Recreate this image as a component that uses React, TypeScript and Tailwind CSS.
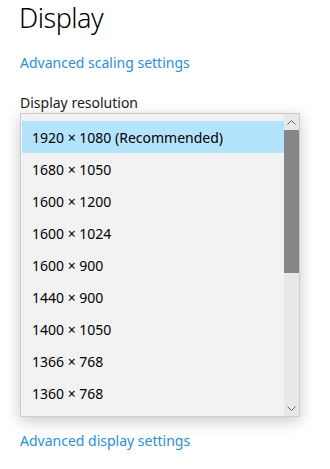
import React from "react";

const items = [
  "1920 × 1080 (Recommended)",
  "1680 × 1050",
  "1600 × 1200",
  "1600 × 1024",
  "1600 × 900",
  "1440 × 900",
  "1400 × 1050",
  "1366 × 768",
  "1360 × 768",
];

export default function App() {
  return (
    <div
      className="w-[330px] h-[469px] bg-white overflow-hidden text-black"
      style={{ fontFamily: '"Noto Sans", "Open Sans", sans-serif' }}
    >
      <div className="pl-[19px] pr-[31px] flex flex-col items-start">
        <h1 className="text-[27px] leading-[36px] font-light tracking-[-0.5px]">Display</h1>
        <div className="mt-[17px] pl-px text-[14px] leading-[20px] text-[#2b8fd3]">
          Advanced scaling settings
        </div>
        <div className="mt-[20px] pl-px text-[14px] leading-[20px] text-[#1a1a1a]">
          Display resolution
        </div>
        <div className="ml-px w-[280px] h-[304px] border border-[#cccccc] bg-[#f2f2f2] flex shadow-[0_4px_14px_rgba(0,0,0,0.22)]">
          <div className="flex-1 pt-[7px] pl-px">
            {items.map((t, i) => (
              <div
                key={t}
                className={
                  "h-[32px] flex items-center pl-[10px] text-[14px] " +
                  (i === 0 ? "bg-[#b4e3fc]" : "")
                }
              >
                {t}
              </div>
            ))}
          </div>
          <div className="w-[15px] bg-[#e8e8e8] flex flex-col">
            <div className="h-[16px] flex items-center justify-center">
              <svg width="9" height="5" viewBox="0 0 9 5">
                <path d="M0.5 4.5 L4.5 0.5 L8.5 4.5" fill="none" stroke="#606060" strokeWidth="1" />
              </svg>
            </div>
            <div className="h-[143px] bg-[#868686]" />
            <div className="flex-1" />
            <div className="h-[16px] flex items-center justify-center">
              <svg width="9" height="5" viewBox="0 0 9 5">
                <path d="M0.5 0.5 L4.5 4.5 L8.5 0.5" fill="none" stroke="#606060" strokeWidth="1" />
              </svg>
            </div>
          </div>
        </div>
        <div className="mt-[14px] pl-px text-[14px] leading-[20px] text-[#2b8fd3]">
          Advanced display settings
        </div>
      </div>
    </div>
  );
}
